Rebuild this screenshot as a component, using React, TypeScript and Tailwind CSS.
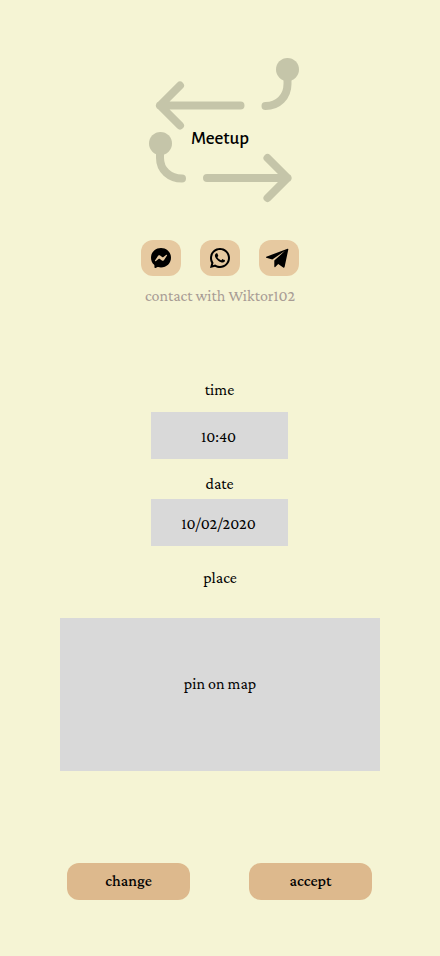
import type { ComponentType } from "react";
import { RiMessengerFill, RiWhatsappLine } from "react-icons/ri";

const serif = "font-['Crimson_Pro','Liberation_Serif',serif]";

function Logo() {
  return (
    <svg
      aria-hidden="true"
      viewBox="140 56 160 164"
      className="col-start-1 row-start-1 h-[164px] w-40 text-[#c5c5a9]"
      fill="none"
      stroke="currentColor"
      strokeWidth="8"
      strokeLinecap="round"
      strokeLinejoin="round"
    >
      <path d="M240.5 105.5H160M180 85.5L160 105.5L180 125.5" />
      <path d="M287.5 72V84C287.5 97 278 106 265.5 106" />
      <circle cx="287.5" cy="69.5" r="11.5" fill="currentColor" stroke="none" />
      <path d="M207 178H287.5M267.5 158L287.5 178L267.5 198" />
      <path d="M160 146V158C160 170 169.5 178.5 182 178.5" />
      <circle cx="160.5" cy="143.5" r="11.5" fill="currentColor" stroke="none" />
    </svg>
  );
}

function PaperPlane({ className }: { className?: string }) {
  return (
    <svg aria-hidden="true" viewBox="0 0 28 28" fill="currentColor" className={className}>
      <path d="M22.6 4.8L1.3 12.7C0.8 13 0.9 13.5 1.3 13.7L7.3 15.6L20 6.8L9.3 16.6V22.6C9.3 23.2 9.9 23.4 10.3 23L13.2 20L18.2 23.6C18.8 24 19.4 23.7 19.6 23.1L23.3 5.5C23.4 5 23.1 4.6 22.6 4.8Z" />
    </svg>
  );
}

type Contact = { name: string; Icon: ComponentType<{ className?: string }>; size: string };

const contacts: Contact[] = [
  { name: "Messenger", Icon: RiMessengerFill, size: "size-6" },
  { name: "WhatsApp", Icon: RiWhatsappLine, size: "size-6" },
  { name: "Telegram", Icon: PaperPlane, size: "size-7" },
];

type FieldProps = { id: string; label: string; value: string; gap: string };

function Field({ id, label, value, gap }: FieldProps) {
  return (
    <div className={`flex flex-col items-center ${gap}`}>
      <label htmlFor={id} className="leading-6">
        {label}
      </label>
      <input
        id={id}
        type="text"
        defaultValue={value}
        className="h-[47px] w-[137px] bg-[#d9d9d9] pt-0.5 pr-0.5 text-center"
      />
    </div>
  );
}

export default function App() {
  return (
    <main
      className={`flex min-h-screen flex-col bg-[#f5f4d4] pt-14 pb-14 text-base text-black lining-nums ${serif}`}
    >
      <header className="grid place-items-center">
        <Logo />
        <h1 className="z-10 col-start-1 row-start-1 pt-0.5 font-['Alegreya_Sans','Lato',sans-serif] text-[19px] font-medium">
          Meetup
        </h1>
      </header>

      <section className="mt-5 flex flex-col items-center">
        <div className="flex gap-[19px]">
          {contacts.map(({ name, Icon, size }) => (
            <button
              key={name}
              type="button"
              aria-label={name}
              className="flex h-9 w-10 items-center justify-center rounded-xl bg-[#e6c9a0]"
            >
              <Icon className={size} />
            </button>
          ))}
        </div>
        <p className="mt-2 leading-6 text-[#a89c94]">contact with Wiktor102</p>
      </section>

      <form className="mt-[70px] flex grow flex-col">
        <div className="flex flex-col gap-[13px] pr-px">
          <Field id="time" label="time" value="10:40" gap="gap-[10px]" />
          <Field id="date" label="date" value="10/02/2020" gap="gap-[3px]" />
        </div>
        <div className="mt-5 flex flex-col px-[60px]">
          <span id="place" className="text-center leading-6">
            place
          </span>
          <button
            type="button"
            aria-describedby="place"
            className="mt-7 h-[153px] bg-[#d9d9d9] pb-[22px]"
          >
            pin on map
          </button>
        </div>
        <div className="mt-auto flex justify-between pr-[68px] pl-[67px] font-medium">
          <button type="button" className="h-[37px] w-[123px] rounded-xl bg-[#ddb98d] pb-0.5">
            change
          </button>
          <button type="submit" className="h-[37px] w-[123px] rounded-xl bg-[#ddb98d] pb-0.5">
            accept
          </button>
        </div>
      </form>
    </main>
  );
}
